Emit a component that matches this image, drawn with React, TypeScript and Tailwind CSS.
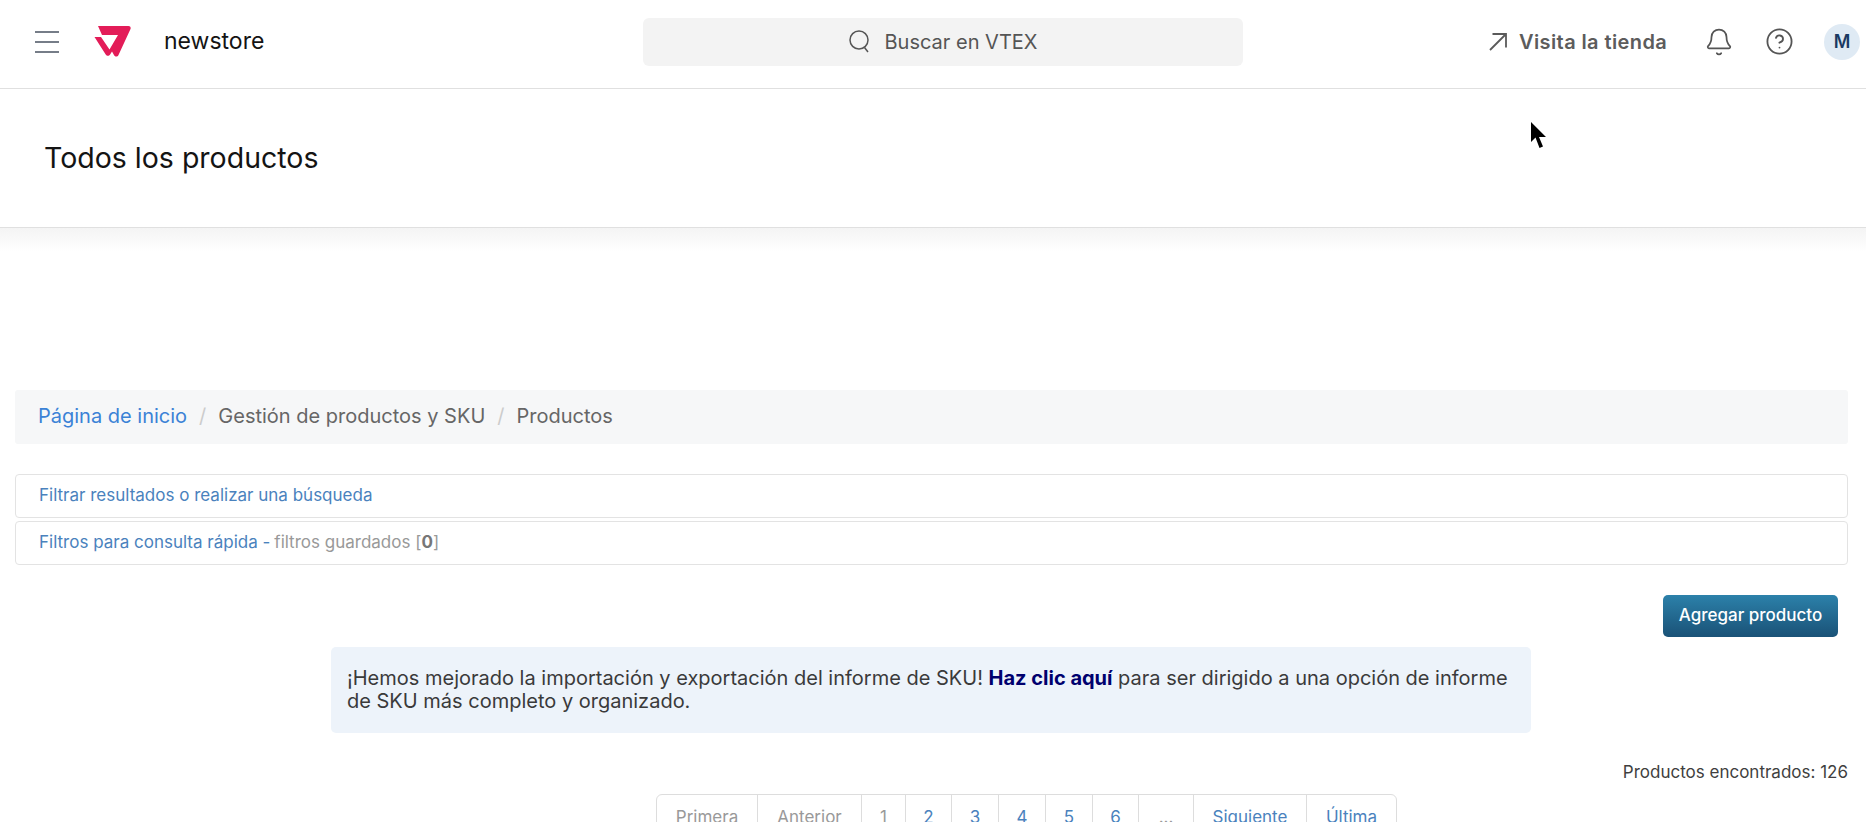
import React from "react";
import { Bell, CircleHelp } from "lucide-react";

const pages = [
  { label: "Primera", w: "w-[101px]", off: true },
  { label: "Anterior", w: "w-[104px]", off: true },
  { label: "1", w: "w-[44px]", off: true },
  { label: "2", w: "w-[46px]" },
  { label: "3", w: "w-[47px]" },
  { label: "4", w: "w-[47px]" },
  { label: "5", w: "w-[47px]" },
  { label: "6", w: "w-[46px]" },
  { label: "...", w: "w-[55px]", off: true },
  { label: "Siguiente", w: "w-[113px]" },
  { label: "Última", w: "w-[89px]" },
];

const VtexLogo = () => (
  <svg width="37" height="33" viewBox="0 0 37 33" className="block">
    <path
      fill="#e31c58"
      d="M4 1h30.500c1.600 0 2.600 1.500 2 3L24.500 30c-.9 2-3.400 2.200-4.400.3L18 26.500l-1.900 3c-1 1.800-3.400 1.800-4.400 0L.5 12H7l8.500 12.500L24 10H8L4 1z"
    />
  </svg>
);

const App: React.FC = () => {
  return (
    <div className="h-[822px] overflow-hidden bg-white font-['Inter',sans-serif] text-[#3f3f40]">
      {/* Top bar */}
      <header className="relative flex h-[89px] items-center border-b border-[#e0e0e0] pb-[5px] pl-[35px]">
        <svg width="24" height="22" viewBox="0 0 24 22" className="text-[#4a5362]">
          <path d="M0 1h24M0 11h24M0 21h24" stroke="currentColor" strokeWidth="1.6" />
        </svg>
        <div className="ml-[35px]">
          <VtexLogo />
        </div>
        <span className="ml-[33px] w-[479px] text-[23px] leading-none text-[#141414]">newstore</span>
        <div className="flex h-[48px] w-[600px] items-center justify-center gap-[15px] rounded-[6px] bg-[#f3f3f3]">
          <svg width="21" height="23" viewBox="0 0 21 23" fill="none" stroke="#555" strokeWidth="1.5">
            <circle cx="10" cy="10" r="9" />
            <path d="M15.5 17.500l3.500 4.500" />
          </svg>
          <span className="text-[20px] text-[#555]">Buscar en VTEX</span>
        </div>
        <div className="ml-[246px] flex items-center">
          <svg width="18" height="18" viewBox="0 0 18 18" fill="none" stroke="#5a5a5a" strokeWidth="1.8">
            <path d="M1 17L17 1M3.500 1H17v13.500" />
          </svg>
          <span className="ml-[12px] text-[20px] font-semibold tracking-[0.4px] text-[#5c5c5c]">Visita la tienda</span>
          <Bell size={30} strokeWidth={1.4} className="ml-[37px] text-[#555]" />
          <CircleHelp size={29} strokeWidth={1.5} className="ml-[31px] text-[#555]" />
          <span className="ml-[30px] flex h-[36px] w-[36px] items-center justify-center rounded-full bg-[#dfeaf4] text-[18px] font-semibold text-[#1a3a63]">
            M
          </span>
        </div>
        <svg width="15" height="27" viewBox="0 0 15 27" className="absolute left-[1531px] top-[122px]">
          <path d="M0 0v20l4.500-4.500 4 10.500 3.500-1.500-4-9.500h7z" fill="#000" />
        </svg>
      </header>

      {/* Page title */}
      <div className="flex h-[139px] items-center border-b border-[#e0e0e0] pl-[44px]">
        <h1 className="text-[28.5px] font-normal text-[#141414]">Todos los productos</h1>
      </div>
      <div className="h-[24px] bg-gradient-to-b from-[#f4f4f4] to-white" />

      <main className="pl-[15px] pr-[18px] pt-[138px]">
        {/* Breadcrumb */}
        <div className="flex h-[54px] items-center rounded-[3px] bg-[#f6f7f8] pb-[2px] pl-[23px] text-[20px]">
          <span className="text-[#3b82d6]">Página de inicio</span>
          <span className="mx-[12px] text-[#ccc]">/</span>
          <span className="text-[#666]">Gestión de productos y SKU</span>
          <span className="mx-[12px] text-[#ccc]">/</span>
          <span className="text-[#666]">Productos</span>
        </div>

        {/* Filters */}
        <div className="mt-[30px] flex h-[44px] items-center rounded-[4px] border border-[#e3e3e3] pl-[23px] text-[17px] text-[#4a82bd]">
          Filtrar resultados o realizar una búsqueda
        </div>
        <div className="mt-[3px] flex h-[44px] items-center rounded-[4px] border border-[#e3e3e3] pl-[23px] text-[17px] text-[#4a82bd]">
          Filtros para consulta rápida -
          <span className="ml-[4px] text-[#999]">
            filtros guardados [<b className="text-[#777]">0</b>]
          </span>
        </div>

        <div className="mt-[30px] flex justify-end pr-[10px]">
          <button className="h-[42px] w-[175px] rounded-[5px] bg-gradient-to-b from-[#2c81aa] to-[#1a5277] text-[17px] font-medium text-white">
            Agregar producto
          </button>
        </div>

        {/* Notice */}
        <div className="ml-[316px] mt-[10px] h-[86px] w-[1200px] rounded-[5px] bg-[#edf3fa] px-[16px] py-[20px] text-[20px] leading-[22.5px] text-[#3a3a3a]">
          ¡Hemos mejorado la importación y exportación del informe de SKU!{" "}
          <b className="text-[#00006e]">Haz clic aquí</b> para ser dirigido a una opción de informe de SKU más completo y organizado.
        </div>

        <p className="mt-[29px] text-right text-[17px] leading-[20px] text-[#3f3f40]">Productos encontrados: 126</p>

        {/* Pagination */}
        <nav className="ml-[641px] mt-[12px] flex h-[60px] w-fit rounded-t-[6px] border border-[#ddd]">
          {pages.map((page) => (
            <span
              key={page.label}
              className={`flex ${page.w} items-start justify-center border-r border-[#ddd] pt-[10px] text-[17px] last:border-r-0 ${
                page.off ? "text-[#999]" : "text-[#4a82bd]"
              }`}
            >
              {page.label}
            </span>
          ))}
        </nav>
      </main>
    </div>
  );
};

export default App;
